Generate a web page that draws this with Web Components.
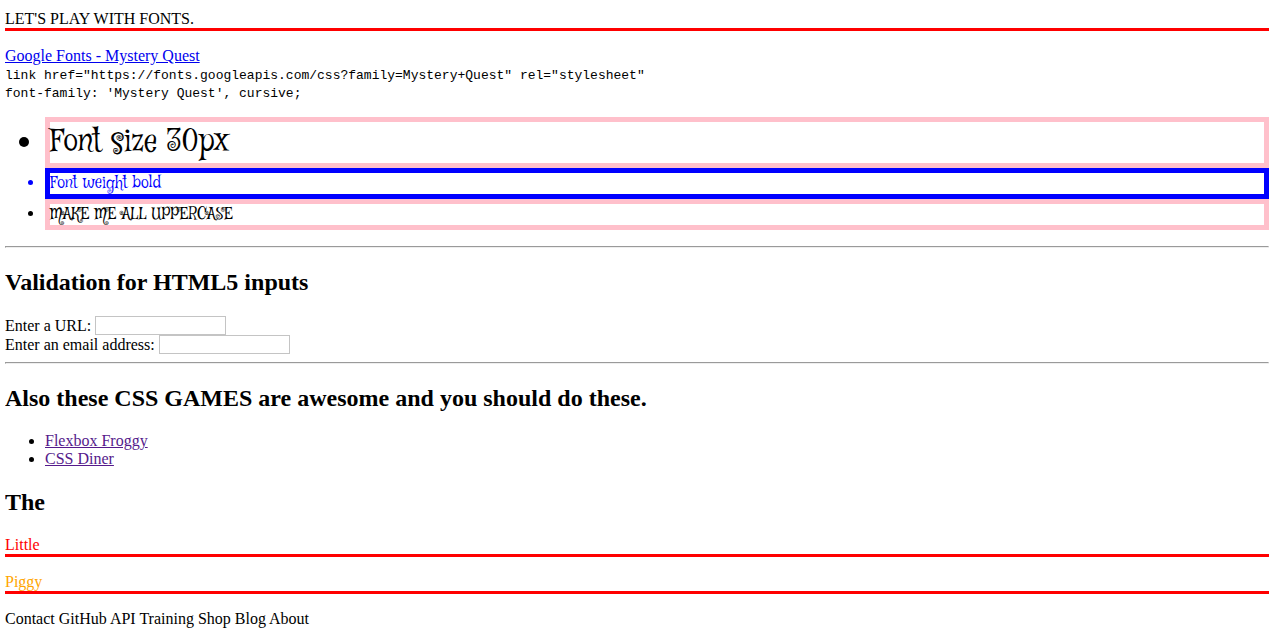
<!DOCTYPE html>
<html lang="en">
<head>
<meta charset="utf-8">
<title>Let's play with fonts</title>
<style>
  body {
    margin: 10px 8px 0 5px;
    background: #fff;
    color: #000;
    font: 16px/18px "Liberation Serif", serif;
  }
</style>
</head>
<body>
<fonts-page></fonts-page>

<script>
  function define(name, markup, setup) {
    const template = document.createElement('template');
    template.innerHTML = markup;
    customElements.define(name, class extends HTMLElement {
      constructor() {
        super();
        this.attachShadow({ mode: 'open' }).append(template.content.cloneNode(true));
      }
      connectedCallback() {
        if (setup) setup(this, this.shadowRoot);
      }
    });
  }

  // Paragraph with a red rule under it
  define('ruled-text', `
    <style>
      :host { display: block; margin-bottom: 16px; }
      p { margin: 0; border-bottom: 3px solid red; }
    </style>
    <p><slot></slot></p>`);

  define('section-title', `
    <style>
      :host { display: block; margin: 20px 0; }
      h2 { margin: 0; font-size: 24px; line-height: 28px; font-weight: bold; }
    </style>
    <h2><slot></slot></h2>`);

  define('section-divider', `
    <style>
      :host { display: block; }
      hr { margin: 0; border: 1px solid; border-color: #9a9a9a #eee #eee #9a9a9a; }
    </style>
    <hr>`);

  define('font-source', `
    <style>
      :host { display: block; margin-bottom: 14px; }
      a { display: inline-block; color: #0000ee; margin-bottom: 2px; }
      code { display: block; font: 13px/18px "Liberation Mono", monospace; }
    </style>
    <a href="https://fonts.google.com/specimen/Mystery+Quest">Google Fonts - Mystery Quest</a>
    <code>link href="https://fonts.googleapis.com/css?family=Mystery+Quest" rel="stylesheet"</code>
    <code>font-family: 'Mystery Quest', cursive;</code>`);

  define('font-samples', `
    <style>
      :host { display: block; margin-bottom: 16px; }
      ul { margin: 0; padding-left: 40px; font-family: "Mystery Quest", cursive; }
      li { border: 5px solid pink; line-height: 21px; }
      .large { font-size: 30px; line-height: 41px; }
      .strong { color: blue; border-color: blue; }
      .upper { text-transform: uppercase; }
    </style>
    <ul>
      <li class="large">Font size 30px</li>
      <li class="strong">Font weight bold</li>
      <li class="upper">Make me all uppercase</li>
    </ul>`);

  define('labelled-input', `
    <style>
      :host { display: flex; align-items: center; gap: 4px; height: 19px; }
      input {
        box-sizing: border-box; width: 131px; height: 19px; margin: 0; padding: 1px;
        border: 1px solid #c4c4c4; border-radius: 0; background: #fff;
        font: 11px "Liberation Sans", sans-serif;
      }
    </style>
    <label for="field"><slot></slot></label>
    <input id="field">`,
    (host, root) => { root.querySelector('input').type = host.getAttribute('type'); });

  define('game-links', `
    <style>
      :host { display: block; }
      ul { margin: 0; padding-left: 40px; }
      a { color: #551a8b; }
    </style>
    <ul>
      <li><a href="https://flexboxfroggy.com/">Flexbox Froggy</a></li>
      <li><a href="https://flukeout.github.io/">CSS Diner</a></li>
    </ul>`);

  define('site-footer', `
    <style>:host { display: block; }</style>
    <footer>Contact GitHub API Training Shop Blog About</footer>`);

  define('fonts-page', `
    <style>
      :host { display: block; }
      form { margin: 0 0 8px; }
      .red { color: red; }
      .orange { color: orange; }
    </style>
    <main>
      <ruled-text>LET'S PLAY WITH FONTS.</ruled-text>
      <font-source></font-source>
      <font-samples></font-samples>
      <section-divider></section-divider>
      <section-title>Validation for HTML5 inputs</section-title>
      <form>
        <labelled-input type="url">Enter a URL:</labelled-input>
        <labelled-input type="email">Enter an email address:</labelled-input>
      </form>
      <section-divider></section-divider>
      <section-title>Also these CSS GAMES are awesome and you should do these.</section-title>
      <game-links></game-links>
      <section-title>The</section-title>
      <ruled-text class="red">Little</ruled-text>
      <ruled-text class="orange">Piggy</ruled-text>
    </main>
    <site-footer></site-footer>`);
</script>
</body>
</html>
